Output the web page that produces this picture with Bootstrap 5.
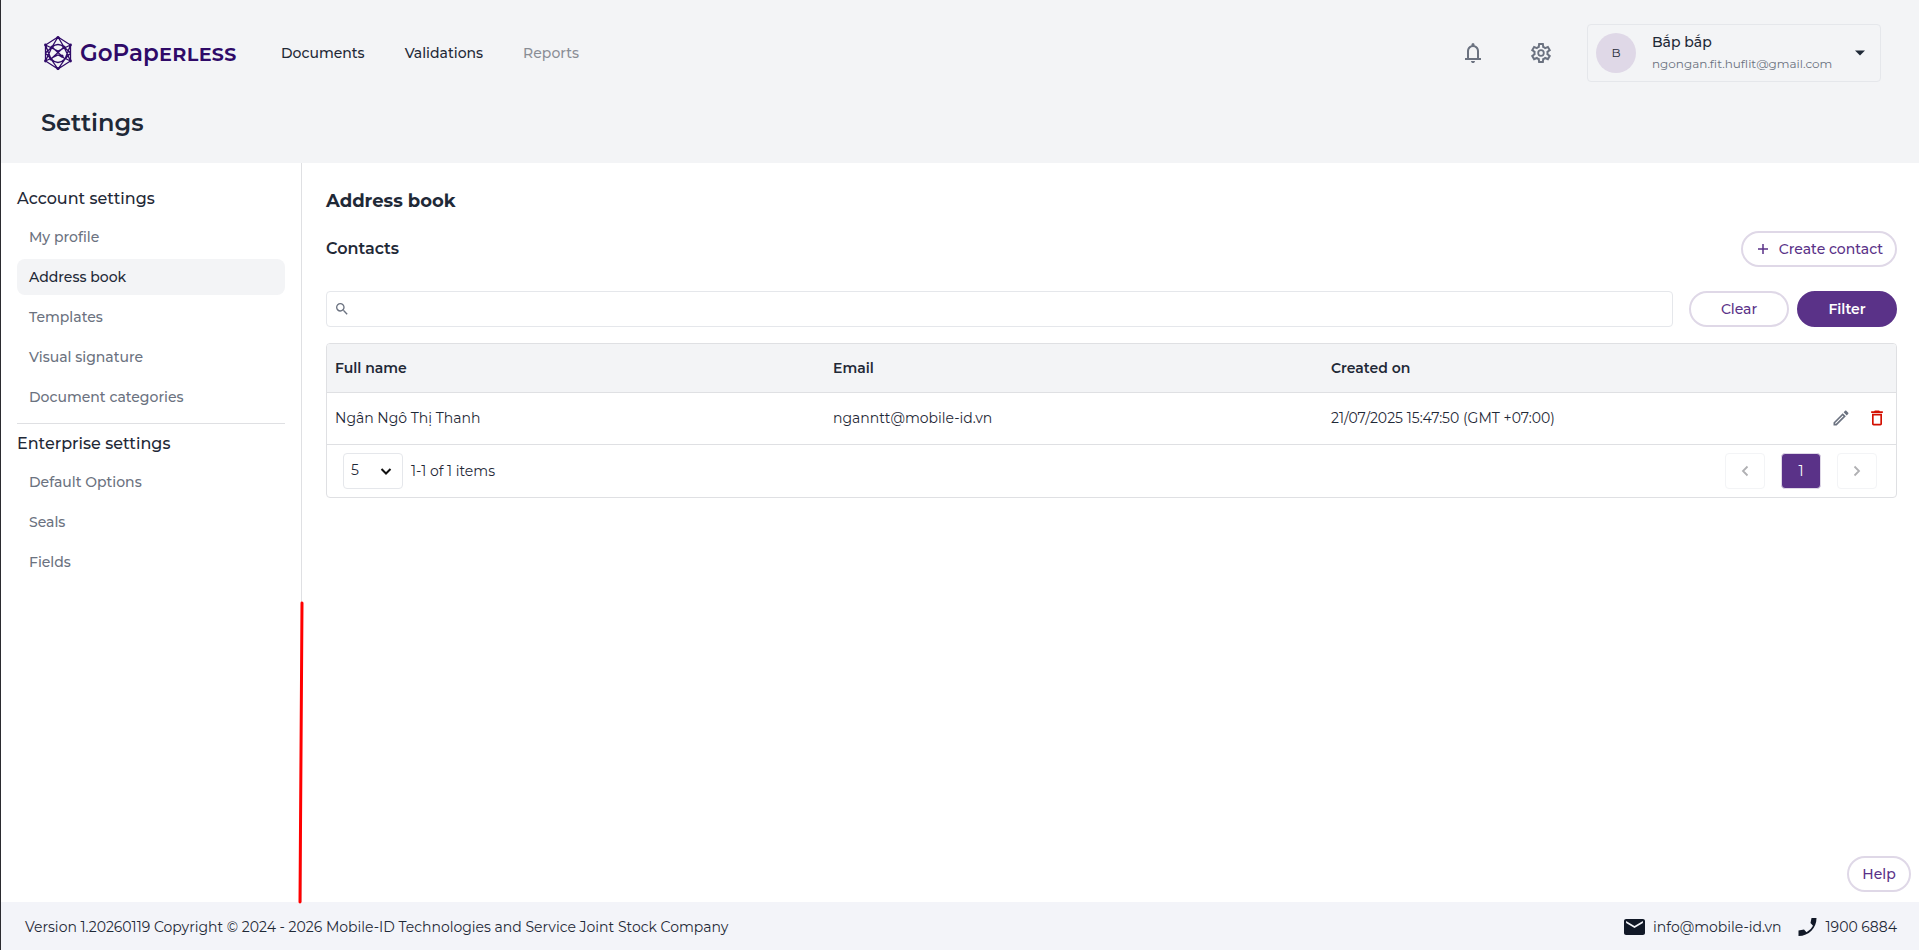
<!DOCTYPE html>
<html lang="en">
<head>
<meta charset="utf-8">
<meta name="viewport" content="width=device-width, initial-scale=1">
<title>Address book - GoPaperless</title>
<link href="https://cdn.jsdelivr.net/npm/bootstrap@5.3.0/dist/css/bootstrap.min.css" rel="stylesheet">
<style>
  :root { --ink: #1f2937; --muted: #6b7280; --line: #dfe0e3; --soft: #f3f4f6; --brand: #5a3288; --ring: #dfd8e7; }
  body { font-family: Montserrat, Inter, "Noto Sans", sans-serif; font-size: 14px; line-height: 20px; color: var(--ink); border-left: 1px solid #2b2b30; }
  svg { display: block; flex: none; }
  a { color: inherit; text-decoration: none; }
  .top-bar { background: var(--soft); padding: 24px 38px 24px 40px; }
  .brand-mark { color: #2f0a68; width: 240px; gap: 5px; }
  .brand-name { font-size: 23px; font-weight: 600; line-height: 24px; }
  .brand-caps { font-variant: small-caps; }
  .main-nav { gap: 40px; font-weight: 500; }
  .icon-btn { border: 0; background: none; padding: 0; color: var(--muted); }
  .top-tools { gap: 44px; margin-right: 34px; }
  .user-box { width: 294px; height: 58px; border: 1px solid #e5e7eb; border-radius: 4px; background: none; padding: 0 14px 0 8px; color: var(--ink); text-align: left; line-height: 22px; }
  .avatar { width: 40px; height: 40px; background: var(--ring); font-size: 12px; }
  .user-mail { font-size: 12px; color: var(--muted); }
  .page-title { font-size: 24px; line-height: 32px; font-weight: 600; margin: 25px 0 0; }
  .side-nav { width: 301px; border-right: 1px solid var(--line); padding: 24px 16px; }
  .side-title { font-size: 16px; line-height: 24px; font-weight: 500; margin: 0 0 8px; }
  .side-list { display: grid; gap: 4px; margin: 0; }
  .side-list a { display: block; padding: 8px 12px; border-radius: 8px; font-weight: 500; color: var(--muted); }
  .side-list a.active { background: var(--soft); color: var(--ink); }
  .side-rule { margin: 8px 0; border-top: 1px solid var(--line); opacity: 1; }
  .content { padding: 24px 22px 0 24px; }
  .content h2 { font-size: 18px; line-height: 28px; font-weight: 700; margin: 0 0 16px; }
  .content h3 { font-size: 16px; line-height: 24px; font-weight: 600; margin: 0; }
  .pill { height: 36px; border: 2px solid var(--ring); border-radius: 18px; background: #fff; color: var(--brand); font-size: 14px; font-weight: 500; padding: 0 12px; }
  .pill-wide { width: 100px; }
  .pill-solid { background: var(--brand); border-color: var(--brand); color: #fff; font-weight: 600; }
  .search-box { height: 36px; border: 1px solid #e5e7eb; border-radius: 4px; padding: 0 7px; color: var(--muted); }
  .search-box input { border: 0; outline: 0; }
  .panel { border: 1px solid var(--line); border-radius: 4px; }
  .contacts { table-layout: fixed; --bs-table-bg: transparent; color: var(--ink); }
  .contacts th, .contacts td { padding: 0 8px; vertical-align: middle; border-bottom: 1px solid var(--line); color: var(--ink); }
  .contacts th { height: 48px; background: var(--soft); font-weight: 600; }
  .contacts td { height: 52px; }
  .col-main { width: 31.74%; }
  .row-tools { gap: 16px; margin-right: 1px; }
  .pager { height: 52px; padding: 0 19px 0 16px; }
  .page-size { width: 60px; height: 36px; border: 1px solid #e5e7eb; padding: 0 7px; font-size: 14px; color: var(--ink); border-radius: 4px; background-position: right 10px center; background-size: 12px;
    background-image: url("data:image/svg+xml,%3Csvg xmlns='http://www.w3.org/2000/svg' viewBox='0 0 12 12'%3E%3Cpath fill='none' stroke='%23111' stroke-width='2' d='m1.500 4 4.500 4.500L10.500 4'/%3E%3C/svg%3E"); }
  .page-btn { width: 40px; height: 36px; border: 1px solid #f3f4f6; border-radius: 4px; background: #fff; color: #b0b0b3; padding: 0; }
  .page-btn.current { background: var(--brand); border-color: var(--ring); color: #fff; }
  .help { position: fixed; right: 8px; bottom: 58px; width: 64px; padding: 0; }
  .foot { background: #f3f4f9; height: 48px; padding: 2px 22px 0 24px; }
  .marker { position: absolute; right: -4px; bottom: -2px; width: 8px; height: 303px; z-index: 2; }
</style>
</head>
<body class="d-flex flex-column min-vh-100">
<header class="top-bar">
  <div class="d-flex align-items-center">
    <a href="#" class="brand-mark d-flex align-items-center">
      <svg width="34" height="36" viewBox="0 0 34 36" fill="none" stroke="currentColor" stroke-width="1.3"><path d="M17 2 29.500 10V26L17 34 4.500 26V10ZM17 2 11 12 4.500 26M17 2 23 12 29.500 26M4.500 10 17 16 29.500 10M4.500 10 10 24 17 34 24 24 29.500 10M4.500 26 17 20 29.500 26M4.500 18 11 12M29.500 18 23 12M4.500 18 10 24M29.500 18 24 24M11 12Q17 7 23 12M10 24Q17 31 24 24M11 12 24 24M23 12 10 24"/><g fill="currentColor" stroke="none"><circle cx="17" cy="2.500" r="1.600"/><circle cx="4.500" cy="10" r="1.400"/><circle cx="29.500" cy="10" r="1.400"/><circle cx="4.500" cy="26" r="1.400"/><circle cx="29.500" cy="26" r="1.400"/><circle cx="17" cy="33.500" r="1.600"/><circle cx="11" cy="12" r="1.600"/><circle cx="23" cy="12" r="1.600"/><circle cx="10" cy="24" r="1.600"/><circle cx="21" cy="21" r="1.600"/></g></svg>
      <span class="brand-name">GoPap<span class="brand-caps">erless</span></span>
    </a>
    <nav class="main-nav d-flex">
      <a href="#">Documents</a><a href="#">Validations</a><a href="#" class="opacity-50">Reports</a>
    </nav>
    <div class="top-tools ms-auto d-flex align-items-center">
      <button class="icon-btn" aria-label="Notifications"><svg width="24" height="24" viewBox="0 0 24 24" fill="currentColor"><path d="M4 19v-2h2v-7q0-2.075 1.250-3.687T10.500 4.200v-.7q0-.625.438-1.062T12 2t1.063.438T13.500 3.500v.7q2 .5 3.250 2.113T18 10v7h2v2zm8 3q-.825 0-1.412-.587T10 20h4q0 .825-.587 1.413T12 22m-4-5h8v-7q0-1.650-1.175-2.825T12 6 9.175 7.175 8 10z"/></svg></button>
      <button class="icon-btn" aria-label="Settings"><svg width="24" height="24" viewBox="0 0 24 24" fill="currentColor" fill-rule="evenodd"><path d="m9.250 22-.4-3.200q-.325-.125-.612-.3t-.563-.375L4.700 19.375l-2.750-4.750 2.575-1.950Q4.500 12.500 4.500 12.338v-.675q0-.163.025-.338L1.950 9.375l2.750-4.750 2.975 1.250q.275-.2.575-.375t.6-.3l.4-3.200h5.500l.4 3.200q.325.125.613.3t.562.375l2.975-1.250 2.750 4.750-2.575 1.950q.025.175.025.338v.674q0 .163-.05.338l2.575 1.950-2.750 4.750-2.950-1.250q-.275.2-.575.375t-.6.3l-.4 3.200zM11 20h1.975l.35-2.650q.775-.2 1.438-.587t1.212-.938l2.475 1.025.975-1.700-2.150-1.625q.125-.35.175-.737T17.500 12t-.05-.787-.175-.738l2.150-1.625-.975-1.700-2.475 1.050q-.55-.575-1.212-.962t-1.438-.588L13 4h-1.975l-.35 2.650q-.775.2-1.437.588t-1.213.937L5.550 7.150l-.975 1.700 2.150 1.600q-.125.375-.175.75t-.05.8q0 .4.05.775t.175.75l-2.150 1.625.975 1.700 2.475-1.050q.55.575 1.213.963t1.437.587z"/><circle cx="12" cy="12" r="2.800" fill="none" stroke="currentColor" stroke-width="1.800"/></svg></button>
    </div>
    <button class="user-box d-flex align-items-center">
      <span class="avatar rounded-circle d-flex align-items-center justify-content-center me-3">B</span>
      <span class="flex-fill"><span class="d-block fw-medium">Bắp bắp</span><span class="user-mail d-block">ngongan.fit.huflit@gmail.com</span></span>
      <svg width="12" height="6" viewBox="0 0 12 6" fill="currentColor"><path d="M1 .5h10L6 5.500z"/></svg>
    </button>
  </div>
  <h1 class="page-title">Settings</h1>
</header>
<div class="d-flex flex-fill">
  <aside class="side-nav flex-shrink-0 position-relative">
    <h2 class="side-title">Account settings</h2>
    <nav class="side-list">
      <a href="#">My profile</a><a href="#" class="active" aria-current="page">Address book</a><a href="#">Templates</a><a href="#">Visual signature</a><a href="#">Document categories</a>
    </nav>
    <hr class="side-rule">
    <h2 class="side-title">Enterprise settings</h2>
    <nav class="side-list"><a href="#">Default Options</a><a href="#">Seals</a><a href="#">Fields</a></nav>
    <svg class="marker" viewBox="0 0 8 303" preserveAspectRatio="none"><path d="M5 2 3 301" fill="none" stroke="#f00" stroke-width="3" stroke-linecap="round"/></svg>
  </aside>
  <main class="content flex-fill">
    <h2>Address book</h2>
    <div class="d-flex justify-content-between align-items-center mb-4">
      <h3>Contacts</h3>
      <button class="pill d-flex align-items-center"><svg class="me-2" width="16" height="16" viewBox="0 0 16 16" stroke="currentColor" stroke-width="1.500"><path d="M8 3v10M3 8h10"/></svg>Create contact</button>
    </div>
    <div class="d-flex gap-2 mb-3">
      <div class="search-box d-flex align-items-center flex-fill me-2">
        <svg width="16" height="16" viewBox="0 0 24 24" fill="currentColor"><path d="M15.500 14h-.79l-.28-.27A6.470 6.470 0 0 0 16 9.500 6.500 6.500 0 1 0 9.500 16c1.610 0 3.090-.59 4.230-1.570l.27.28v.79l5 4.990L20.490 19zm-6 0C7.010 14 5 11.990 5 9.500S7.010 5 9.500 5 14 7.010 14 9.500 11.990 14 9.500 14"/></svg>
        <input type="text" class="flex-fill ms-2" aria-label="Search contacts">
      </div>
      <button class="pill pill-wide">Clear</button>
      <button class="pill pill-wide pill-solid">Filter</button>
    </div>
    <div class="panel overflow-hidden">
      <table class="table contacts mb-0">
        <thead><tr><th class="col-main">Full name</th><th class="col-main">Email</th><th class="col-main">Created on</th><th></th></tr></thead>
        <tbody><tr><td>Ngân Ngô Thị Thanh</td><td>nganntt@mobile-id.vn</td><td>21/07/2025 15:47:50 (GMT +07:00)</td>
          <td><div class="row-tools d-flex justify-content-end">
            <button class="icon-btn" aria-label="Edit"><svg width="20" height="20" viewBox="0 0 24 24" fill="currentColor"><path d="m14.060 9.020.92.92L5.920 19H5v-.92zM17.660 3c-.25 0-.51.1-.7.29l-1.830 1.830 3.750 3.750 1.830-1.830c.39-.39.39-1.020 0-1.410l-2.340-2.340c-.2-.2-.45-.29-.71-.29m-3.600 3.190L3 17.250V21h3.750L17.810 9.940z"/></svg></button>
            <button class="icon-btn" aria-label="Delete"><svg width="20" height="20" viewBox="0 0 24 24" fill="#d30f00"><path d="M6 19c0 1.100.9 2 2 2h8c1.100 0 2-.9 2-2V7H6zM8 9h8v10H8zm7.500-5-1-1h-5l-1 1H5v2h14V4z"/></svg></button>
          </div></td></tr></tbody>
      </table>
      <div class="pager d-flex align-items-center">
        <select class="form-select page-size me-2" aria-label="Items per page"><option>5</option><option>10</option></select>
        <span>1-1 of 1 items</span>
        <div class="ms-auto d-flex gap-3">
          <button class="page-btn d-flex align-items-center justify-content-center" aria-label="Previous page"><svg width="8" height="12" viewBox="0 0 8 12" fill="none" stroke="currentColor" stroke-width="1.800"><path d="M6.500 1.500 2 6l4.500 4.500"/></svg></button>
          <button class="page-btn current" aria-current="page">1</button>
          <button class="page-btn d-flex align-items-center justify-content-center" aria-label="Next page"><svg width="8" height="12" viewBox="0 0 8 12" fill="none" stroke="currentColor" stroke-width="1.800"><path d="M1.500 1.500 6 6l-4.500 4.500"/></svg></button>
        </div>
      </div>
    </div>
  </main>
</div>
<footer class="foot d-flex align-items-center justify-content-between">
  <span>Version 1.20260119 Copyright © 2024 - 2026 Mobile-ID Technologies and Service Joint Stock Company</span>
  <div class="d-flex align-items-center gap-3">
    <a href="mailto:info@mobile-id.vn" class="d-flex align-items-center gap-2"><svg width="21" height="16" viewBox="2 4 20 16" preserveAspectRatio="none" fill="#111827"><path d="M20 4H4c-1.100 0-2 .9-2 2v12c0 1.100.9 2 2 2h16c1.100 0 2-.9 2-2V6c0-1.100-.9-2-2-2m0 4-8 5-8-5V6l8 5 8-5z"/></svg>info@mobile-id.vn</a>
    <a href="tel:19006884" class="d-flex align-items-center gap-2"><svg width="20" height="20" viewBox="0 0 20 20" fill="#111827"><path d="M13.500 1H18.500C18.500 11 11 19 .5 19v-5.500L6 12.500 8.500 15.300Q13 13 15 8.800L12.500 6Z"/></svg>1900 6884</a>
  </div>
</footer>
<button class="pill help">Help</button>
<script src="https://cdn.jsdelivr.net/npm/bootstrap@5.3.0/dist/js/bootstrap.bundle.min.js"></script>
</body>
</html>
